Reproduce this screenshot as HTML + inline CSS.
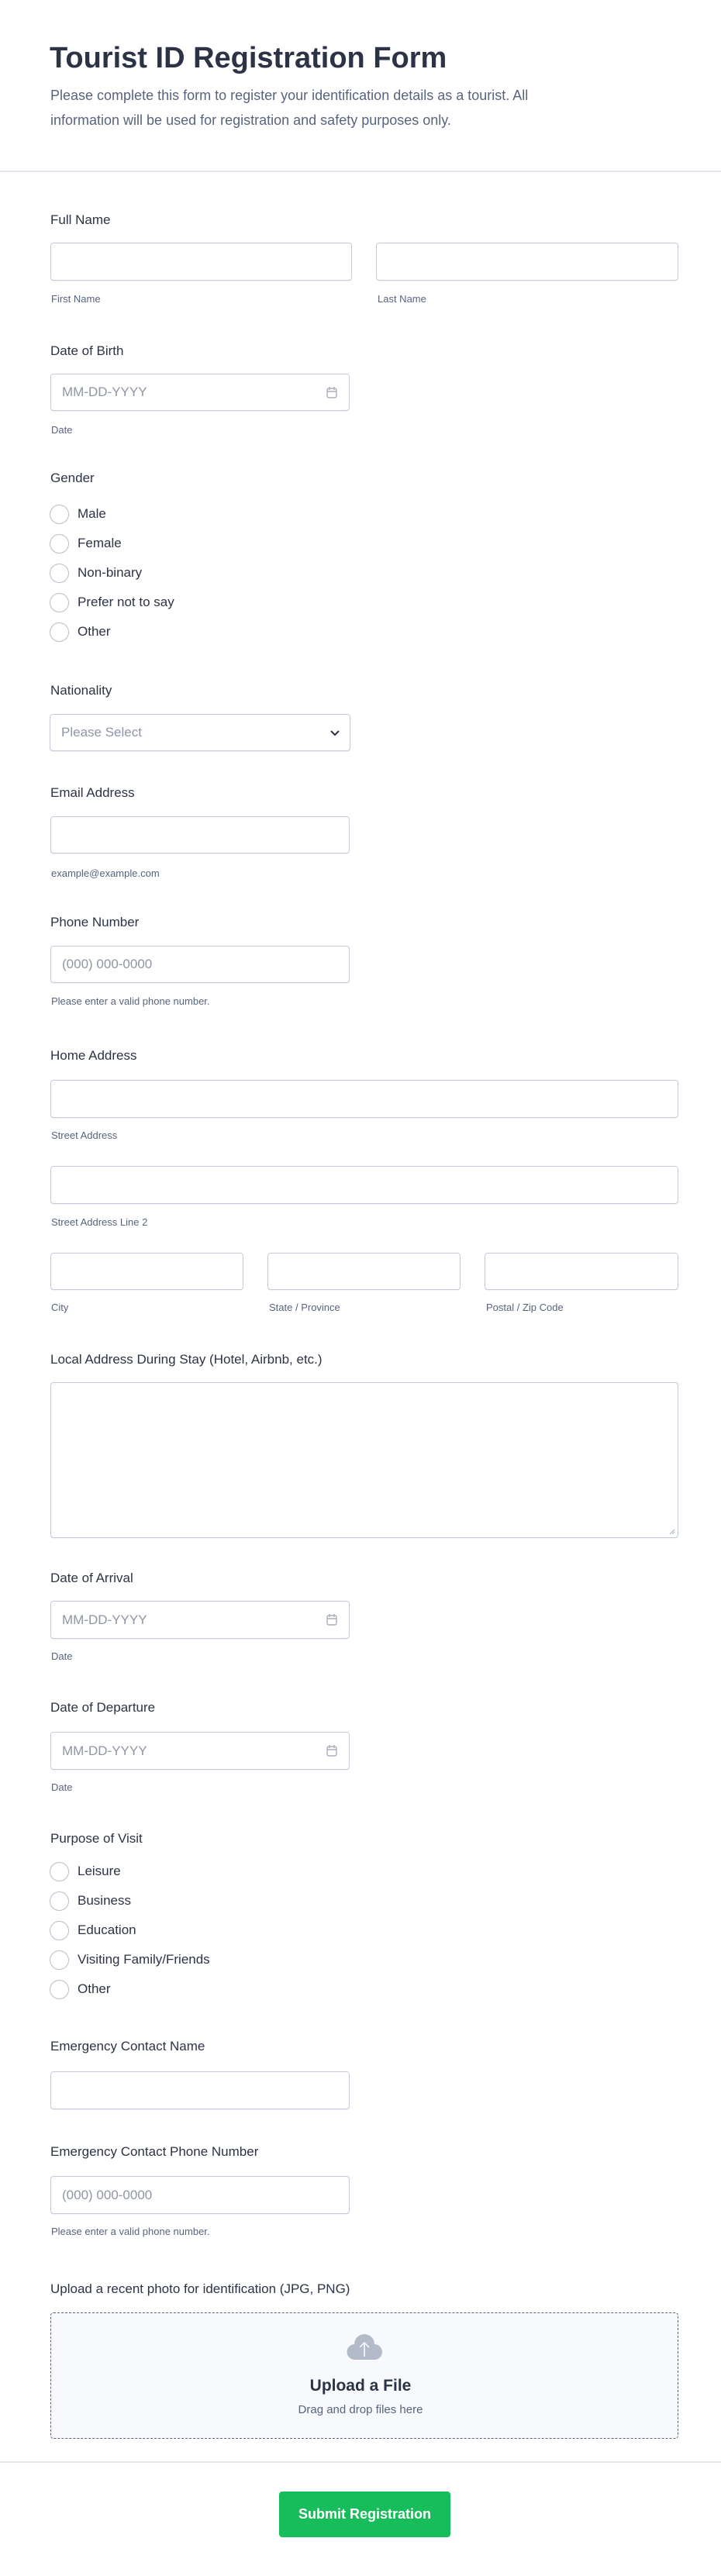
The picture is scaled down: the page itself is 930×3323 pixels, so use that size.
<!DOCTYPE html>
<html><head><meta charset="utf-8"><style>
*{box-sizing:border-box;margin:0;padding:0}
body{width:930px;height:3323px;position:relative;background:#fff;font-family:"Liberation Sans",sans-serif;color:#2c3345;overflow:hidden}
.a{position:absolute}
.lbl{position:absolute;left:65px;font-size:17px;line-height:20px;color:#2c3345}
.sub{position:absolute;font-size:13px;line-height:16px;color:#57647e}
.in{position:absolute;border:1px solid #c3cad8;border-radius:4px;background:#fff;box-shadow:0 1px 1px rgba(0,0,0,.05)}
.ph{position:absolute;left:14px;top:50%;transform:translateY(-50%);font-size:17px;color:#8f96a3}
.r{position:absolute;left:64px;width:25px;height:25px;border:1px solid #b8bdc9;border-radius:50%}
.rt{position:absolute;left:100px;font-size:17px;line-height:20px;color:#2c3345}
.hr{position:absolute;left:0;width:930px;height:2px;background:#e3e6ef}
</style></head><body>
<div class="a" style="left:64px;top:52px;font-size:38px;font-weight:bold;line-height:46px;color:#2c3345">Tourist ID Registration Form</div>
<div class="a" style="left:65px;top:107px;width:820px;font-size:18px;line-height:32px;color:#57647e">Please complete this form to register your identification details as a tourist. All<br>information will be used for registration and safety purposes only.</div>
<div class="hr" style="top:220px"></div>

<div class="lbl" style="top:274px">Full Name</div>
<div class="in" style="left:65px;top:313px;width:389px;height:49px"></div>
<div class="in" style="left:485px;top:313px;width:390px;height:49px"></div>
<div class="sub" style="left:66px;top:378px">First Name</div>
<div class="sub" style="left:487px;top:378px">Last Name</div>

<div class="lbl" style="top:443px">Date of Birth</div>
<div class="in" style="left:65px;top:482px;width:386px;height:48px"><span class="ph">MM-DD-YYYY</span><svg class="a" style="right:14px;top:15px" width="16" height="17" viewBox="0 0 16 17" fill="none" stroke="#a8afbd" stroke-width="1.4"><rect x="2" y="3" width="12" height="12" rx="2"/><path d="M5 1v4M11 1v4M2 7h12"/></svg></div>
<div class="sub" style="left:66px;top:547px">Date</div>

<div class="lbl" style="top:607px">Gender</div>
<div class="r" style="top:651px"></div><div class="rt" style="top:653px">Male</div>
<div class="r" style="top:689px"></div><div class="rt" style="top:691px">Female</div>
<div class="r" style="top:727px"></div><div class="rt" style="top:729px">Non-binary</div>
<div class="r" style="top:765px"></div><div class="rt" style="top:767px">Prefer not to say</div>
<div class="r" style="top:803px"></div><div class="rt" style="top:805px">Other</div>

<div class="lbl" style="top:881px">Nationality</div>
<div class="in" style="left:64px;top:921px;width:388px;height:48px"><span class="ph">Please Select</span><svg class="a" style="right:12px;top:19px" width="14" height="10" viewBox="0 0 14 10" fill="none" stroke="#2c3345" stroke-width="2"><path d="M2 2l5 5 5-5"/></svg></div>

<div class="lbl" style="top:1013px">Email Address</div>
<div class="in" style="left:65px;top:1053px;width:386px;height:48px"></div>
<div class="sub" style="left:66px;top:1119px">example@example.com</div>

<div class="lbl" style="top:1180px">Phone Number</div>
<div class="in" style="left:65px;top:1220px;width:386px;height:48px"><span class="ph">(000) 000-0000</span></div>
<div class="sub" style="left:66px;top:1284px">Please enter a valid phone number.</div>

<div class="lbl" style="top:1352px">Home Address</div>
<div class="in" style="left:65px;top:1393px;width:810px;height:49px"></div>
<div class="sub" style="left:66px;top:1457px">Street Address</div>
<div class="in" style="left:65px;top:1504px;width:810px;height:49px"></div>
<div class="sub" style="left:66px;top:1569px">Street Address Line 2</div>
<div class="in" style="left:65px;top:1616px;width:249px;height:48px"></div>
<div class="in" style="left:345px;top:1616px;width:249px;height:48px"></div>
<div class="in" style="left:625px;top:1616px;width:250px;height:48px"></div>
<div class="sub" style="left:66px;top:1679px">City</div>
<div class="sub" style="left:347px;top:1679px">State / Province</div>
<div class="sub" style="left:627px;top:1679px">Postal / Zip Code</div>

<div class="lbl" style="top:1744px">Local Address During Stay (Hotel, Airbnb, etc.)</div>
<div class="in" style="left:65px;top:1783px;width:810px;height:201px"><svg class="a" style="right:3px;bottom:3px" width="8" height="8" viewBox="0 0 8 8" stroke="#a8afbd"><path d="M1 7L7 1M4 7L7 4"/></svg></div>

<div class="lbl" style="top:2026px">Date of Arrival</div>
<div class="in" style="left:65px;top:2065px;width:386px;height:49px"><span class="ph">MM-DD-YYYY</span><svg class="a" style="right:14px;top:15px" width="16" height="17" viewBox="0 0 16 17" fill="none" stroke="#a8afbd" stroke-width="1.4"><rect x="2" y="3" width="12" height="12" rx="2"/><path d="M5 1v4M11 1v4M2 7h12"/></svg></div>
<div class="sub" style="left:66px;top:2129px">Date</div>

<div class="lbl" style="top:2193px">Date of Departure</div>
<div class="in" style="left:65px;top:2234px;width:386px;height:49px"><span class="ph">MM-DD-YYYY</span><svg class="a" style="right:14px;top:15px" width="16" height="17" viewBox="0 0 16 17" fill="none" stroke="#a8afbd" stroke-width="1.4"><rect x="2" y="3" width="12" height="12" rx="2"/><path d="M5 1v4M11 1v4M2 7h12"/></svg></div>
<div class="sub" style="left:66px;top:2298px">Date</div>

<div class="lbl" style="top:2362px">Purpose of Visit</div>
<div class="r" style="top:2402px"></div><div class="rt" style="top:2404px">Leisure</div>
<div class="r" style="top:2440px"></div><div class="rt" style="top:2442px">Business</div>
<div class="r" style="top:2478px"></div><div class="rt" style="top:2480px">Education</div>
<div class="r" style="top:2516px"></div><div class="rt" style="top:2518px">Visiting Family/Friends</div>
<div class="r" style="top:2554px"></div><div class="rt" style="top:2556px">Other</div>

<div class="lbl" style="top:2630px">Emergency Contact Name</div>
<div class="in" style="left:65px;top:2672px;width:386px;height:49px"></div>

<div class="lbl" style="top:2766px">Emergency Contact Phone Number</div>
<div class="in" style="left:65px;top:2807px;width:386px;height:49px"><span class="ph">(000) 000-0000</span></div>
<div class="sub" style="left:66px;top:2871px">Please enter a valid phone number.</div>

<div class="lbl" style="top:2943px">Upload a recent photo for identification (JPG, PNG)</div>
<div class="a" style="left:65px;top:2983px;width:810px;height:163px;border:1.5px dashed #5a6275;border-radius:4px;background:#f8f9fd"></div>
<svg class="a" style="left:446px;top:3010px" width="48" height="36" viewBox="0 0 48 36"><path d="M12 34a10 10 0 0 1-1-20A13 13 0 0 1 37 14a10 10 0 0 1 0 20z" fill="#b3bbcb"/><path d="M24 30V12M18 18l6-6 6 6" stroke="#fff" stroke-width="1.5" fill="none"/></svg>
<div class="a" style="left:0;width:930px;top:3066px;text-align:center;font-size:21px;font-weight:bold;color:#2c3345">Upload a File</div>
<div class="a" style="left:0;width:930px;top:3100px;text-align:center;font-size:15px;color:#57647e">Drag and drop files here</div>

<div class="hr" style="top:3175px"></div>
<div class="a" style="left:360px;top:3214px;width:221px;height:59px;background:#18bd5b;border-radius:4px;color:#fff;font-size:18px;font-weight:bold;line-height:59px;text-align:center">Submit Registration</div>
</body></html>
